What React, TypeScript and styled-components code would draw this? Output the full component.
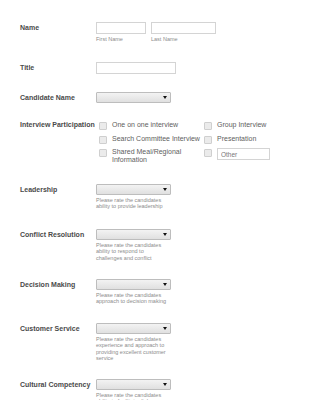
import React from 'react'
import styled, { createGlobalStyle } from 'styled-components'

const GlobalStyle = createGlobalStyle`
  html, body {
    margin: 0;
    padding: 0;
    background: #fff;
  }
  body {
    font-family: "Liberation Sans", Arial, Helvetica, sans-serif;
  }
`

interface ratingRow {
  label: string,
  help: string,
  space: number
}

const ratings: Array<ratingRow> = [
  { label: 'Leadership', help: 'Please rate the candidates ability to provide leadership', space: 19 },
  { label: 'Conflict Resolution', help: 'Please rate the candidates ability to respond to challenges and conflict', space: 18 },
  { label: 'Decision Making', help: 'Please rate the candidates approach to decision making', space: 18 },
  { label: 'Customer Service', help: 'Please rate the candidates experience and approach to providing excellent customer service', space: 17.5 },
  { label: 'Cultural Competency', help: 'Please rate the candidates ability to facilitate dialogue and engage with diverse groups', space: 18 },
]

const participation = [
  'One on one interview',
  'Group Interview',
  'Search Committee Interview',
  'Presentation',
  'Shared Meal/Regional Information',
]

const Select = () => (
  <SelectBox>
    <Arrow />
  </SelectBox>
)

const App = () => {
  return (
    <FormView>
      <GlobalStyle />
      <Row $space={20}>
        <Label $h={12}>Name</Label>
        <NameFields>
          <NameField>
            <TextInput $w={50} />
            <SubLabel>First Name</SubLabel>
          </NameField>
          <NameField>
            <TextInput $w={65} />
            <SubLabel>Last Name</SubLabel>
          </NameField>
        </NameFields>
      </Row>
      <Row $space={18}>
        <Label $h={12}>Title</Label>
        <TextInput $w={80} />
      </Row>
      <Row $space={18.5}>
        <Label $h={11}>Candidate Name</Label>
        <Select />
      </Row>
      <Row $space={19.5}>
        <Label $h={8}>Interview Participation</Label>
        <OptionGrid>
          {participation.map((item) => (
            <Option key={item}>
              <CheckBox />
              <OptionText>{item}</OptionText>
            </Option>
          ))}
          <Option>
            <CheckBox />
            <OtherInput placeholder="Other" />
          </Option>
        </OptionGrid>
      </Row>
      {ratings.map((rating) => (
        <Row key={rating.label} $space={rating.space}>
          <Label $h={11}>{rating.label}</Label>
          <div>
            <Select />
            <HelpText>{rating.help}</HelpText>
          </div>
        </Row>
      ))}
    </FormView>
  )
}

const FormView = styled.div`
  padding: 22px 0 0 20px;
  height: 400px;
  box-sizing: border-box;
  overflow: hidden;
`
const Row = styled.div<{ $space: number }>`
  display: flex;
  align-items: flex-start;
  margin-bottom: ${(p) => p.$space}px;
`
const Label = styled.div<{ $h: number }>`
  width: 76px;
  flex-shrink: 0;
  font-size: 7px;
  font-weight: bold;
  color: #4a4a4a;
  line-height: ${(p) => p.$h}px;
  white-space: nowrap;
`
const NameFields = styled.div`
  display: flex;
  gap: 5px;
`
const NameField = styled.div`
  display: flex;
  flex-direction: column;
`
const TextInput = styled.div<{ $w: number }>`
  width: ${(p) => p.$w}px;
  height: 12px;
  box-sizing: border-box;
  border: 1px solid #d4d4d4;
  background: #fff;
`
const SubLabel = styled.div`
  margin-top: 1.5px;
  font-size: 5.5px;
  line-height: 6.4px;
  color: #8c8c8c;
`
const SelectBox = styled.div`
  position: relative;
  width: 75px;
  height: 11px;
  box-sizing: border-box;
  border: 1px solid #bdbdbd;
  border-radius: 1px;
  background: linear-gradient(#f3f3f3, #e0e0e0);
`
const Arrow = styled.span`
  position: absolute;
  right: 3px;
  top: 3.5px;
  width: 0;
  height: 0;
  border-left: 2px solid transparent;
  border-right: 2px solid transparent;
  border-top: 3px solid #111;
`
const HelpText = styled.div`
  width: 70px;
  margin-top: 2px;
  font-size: 5.5px;
  line-height: 6.4px;
  color: #8c8c8c;
`
const OptionGrid = styled.div`
  display: grid;
  grid-template-columns: 105px 70px;
  row-gap: 4.5px;
  margin-left: 3px;
`
const Option = styled.div`
  display: flex;
  align-items: flex-start;
`
const CheckBox = styled.span`
  flex-shrink: 0;
  width: 6px;
  height: 6px;
  margin: 1px 5px 0 0;
  border: 1px solid #cfcfcf;
  border-radius: 1px;
  background: #ebebeb;
`
const OptionText = styled.div`
  width: 92px;
  font-size: 7px;
  line-height: 8px;
  color: #606060;
`
const OtherInput = styled.input`
  width: 53px;
  height: 12px;
  margin: 0;
  padding: 0 0 0 3px;
  box-sizing: border-box;
  border: 1px solid #d4d4d4;
  font-family: "Liberation Sans", Arial, sans-serif;
  font-size: 6.5px;
  color: #666;
  outline: none;
  &::placeholder {
    color: #777;
  }
`

export default App
